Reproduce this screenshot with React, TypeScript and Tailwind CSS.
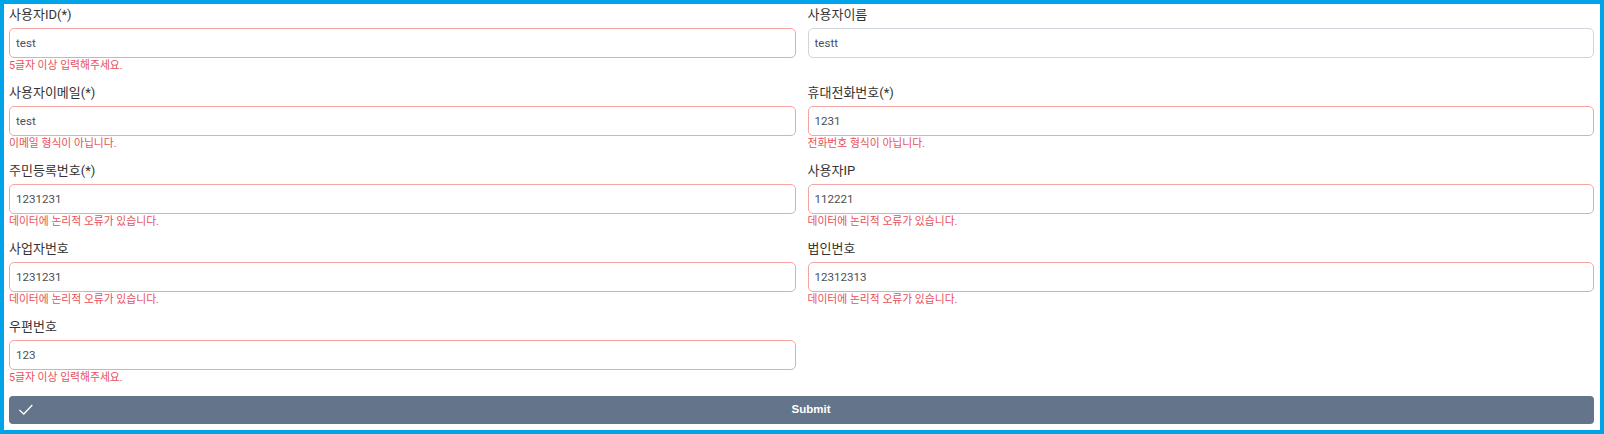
const fields = [
  { label: "사용자ID(*)", value: "test", error: "5글자 이상 입력해주세요." },
  { label: "사용자이름", value: "testt", error: "" },
  { label: "사용자이메일(*)", value: "test", error: "이메일 형식이 아닙니다." },
  { label: "휴대전화번호(*)", value: "1231", error: "전화번호 형식이 아닙니다." },
  { label: "주민등록번호(*)", value: "1231231", error: "데이터에 논리적 오류가 있습니다." },
  { label: "사용자IP", value: "112221", error: "데이터에 논리적 오류가 있습니다." },
  { label: "사업자번호", value: "1231231", error: "데이터에 논리적 오류가 있습니다." },
  { label: "법인번호", value: "12312313", error: "데이터에 논리적 오류가 있습니다." },
  { label: "우편번호", value: "123", error: "5글자 이상 입력해주세요." },
];

function Field({ label, value, error }: { label: string; value: string; error: string }) {
  return (
    <div className="h-[78px]">
      <label className="block h-6 text-[13px] leading-[21px] text-[#333333]">{label}</label>
      <input
        readOnly
        value={value}
        className={`block h-[30px] w-full rounded-[5px] border bg-white px-[6px] text-[11.6px] text-[#495057] outline-none ${
          error ? "border-[#f5a3a3]" : "border-[#d1d5db]"
        }`}
      />
      {error && <p className="text-[10.8px] leading-[16px] text-[#e8505b]">{error}</p>}
    </div>
  );
}

export default function App() {
  return (
    <div className="h-[434px] w-[1604px] border-4 border-[#00a2e8] bg-white pl-[5px] pr-[6px] font-['Roboto','Noto_Sans_CJK_KR',sans-serif]">
      <form>
        <div className="grid grid-cols-2 gap-x-3">
          {fields.map((f) => (
            <Field key={f.label} {...f} />
          ))}
        </div>
        <button
          type="button"
          className="mt-[2px] flex h-7 w-full items-center rounded-[4px] bg-[#64748b] px-[10px] font-['Liberation_Sans',sans-serif] text-[11.5px] font-bold text-white"
        >
          <svg
            className="mr-[5px] h-[14px] w-[14px]"
            viewBox="0 0 14 14"
            fill="none"
            stroke="currentColor"
            strokeWidth="1.3"
          >
            <path d="M0.3 7 L4.8 11 L13.3 2" />
          </svg>
          <span className="flex-1 text-center">Submit</span>
        </button>
      </form>
    </div>
  );
}
